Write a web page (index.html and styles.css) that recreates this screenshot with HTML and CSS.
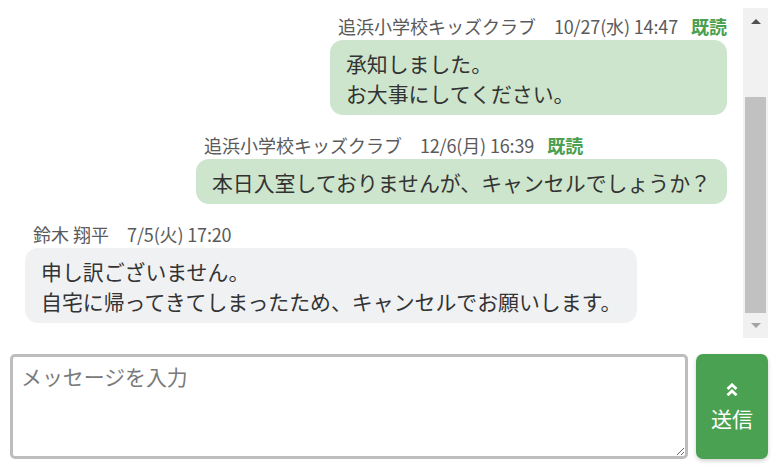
FILE: index.html
```html
<!DOCTYPE html>
<html lang="ja">
<head>
<meta charset="utf-8">
<link rel="stylesheet" href="styles.css">
</head>
<body>
<div class="chat">
  <div class="history">
    <div class="messages">
      <div class="msg mine">
        <div class="meta"><span class="name">追浜小学校キッズクラブ</span><span class="time">10/27(水) 14:47</span><span class="read">既読</span></div>
        <div class="bubble">承知しました。<br>お大事にしてください。</div>
      </div>
      <div class="msg mine">
        <div class="meta"><span class="name">追浜小学校キッズクラブ</span><span class="time">12/6(月) 16:39</span><span class="read">既読</span></div>
        <div class="bubble">本日入室しておりませんが、キャンセルでしょうか？</div>
      </div>
      <div class="msg theirs">
        <div class="meta"><span class="name">鈴木 翔平</span><span class="time">7/5(火) 17:20</span></div>
        <div class="bubble">申し訳ございません。<br>自宅に帰ってきてしまったため、キャンセルでお願いします。</div>
      </div>
    </div>
    <div class="scrollbar">
      <div class="sb-btn"><span class="arrow up"></span></div>
      <div class="sb-track"><div class="sb-thumb"></div></div>
      <div class="sb-btn"><span class="arrow down"></span></div>
    </div>
  </div>
  <div class="composer">
    <textarea class="input" placeholder="メッセージを入力"></textarea>
    <button class="send" type="button">
      <svg class="send-icon" width="12" height="14" viewBox="0 0 12 14"><polyline points="1.5,6 6,1.8 10.5,6" fill="none" stroke="#fff" stroke-width="2.8" stroke-linejoin="miter"/><polyline points="1.5,12.2 6,8 10.5,12.2" fill="none" stroke="#fff" stroke-width="2.8" stroke-linejoin="miter"/></svg>
      <span class="send-label">送信</span>
    </button>
  </div>
</div>
</body>
</html>
```

FILE: styles.css
```css
* { box-sizing: border-box; }
html, body { margin: 0; padding: 0; background: #fff; }
body {
  font-family: "Noto Sans CJK JP", "Noto Sans", sans-serif;
  color: #333;
  width: 778px;
  height: 468px;
  overflow: hidden;
}
.chat {
  display: flex;
  flex-direction: column;
  padding: 8px 10px 0 10px;
  gap: 16px;
}
.history {
  display: flex;
  height: 330px;
}
.messages {
  flex: 1;
  display: flex;
  flex-direction: column;
  justify-content: flex-end;
  overflow: hidden;
  padding: 0 16px 15px 15px;
  gap: 18px;
}
.msg {
  display: flex;
  flex-direction: column;
  align-items: stretch;
  gap: 2px;
}
.msg.mine { align-self: flex-end; }
.msg.theirs { align-self: flex-start; }
.meta {
  font-size: 18px;
  line-height: 24px;
  color: #5a5a5a;
  display: flex;
  white-space: nowrap;
  padding-left: 8px;
}
.name { margin-right: 18px; }
.time { margin-right: 13px; letter-spacing: -0.15px; }
.msg.theirs .time { margin-right: 0; }
.read { color: #4a9f50; font-weight: 700; }
.bubble {
  font-size: 20.9px;
  line-height: 30px;
  padding: 7.5px 16px;
  border-radius: 13px;
  white-space: nowrap;
}
.mine .bubble { background: #cde5cc; }
.theirs .bubble { background: #f0f1f3; }
.scrollbar {
  width: 25px;
  background: #f1f1f1;
  display: flex;
  flex-direction: column;
}
.sb-btn {
  height: 25px;
  display: flex;
  align-items: center;
  justify-content: center;
}
.arrow {
  width: 0;
  height: 0;
  border-left: 5px solid transparent;
  border-right: 5px solid transparent;
}
.arrow.up { border-bottom: 5px solid #505050; margin-top: 1px; }
.arrow.down { border-top: 5px solid #a3a3a3; }
.sb-track {
  flex: 1;
  display: flex;
  flex-direction: column;
  justify-content: flex-end;
  padding: 0 2px;
}
.sb-thumb {
  height: 216px;
  background: #c1c1c1;
}
.composer {
  display: flex;
  gap: 8px;
  height: 105px;
}
.input {
  flex: 1;
  height: 105px;
  border: 3px solid #bdbdbd;
  border-radius: 5px;
  padding: 4px 8px;
  font-family: "Noto Sans CJK JP", "Noto Sans", sans-serif;
  font-size: 20.9px;
  line-height: 30px;
  color: #333;
  resize: vertical;
  outline: none;
}
.input::placeholder { color: #7a7a7a; }
.send {
  width: 72px;
  height: 105px;
  border: none;
  border-radius: 7px;
  background: #4aa151;
  color: #fff;
  display: flex;
  flex-direction: column;
  align-items: center;
  justify-content: center;
  gap: 6px;
  padding: 3px 0 0 0;
  box-shadow: 0 2px 4px rgba(0,0,0,0.18);
  font-family: "Noto Sans CJK JP", "Noto Sans", sans-serif;
}
.send-icon { display: block; }
.send-label {
  font-size: 21px;
  line-height: 30px;
}
```
